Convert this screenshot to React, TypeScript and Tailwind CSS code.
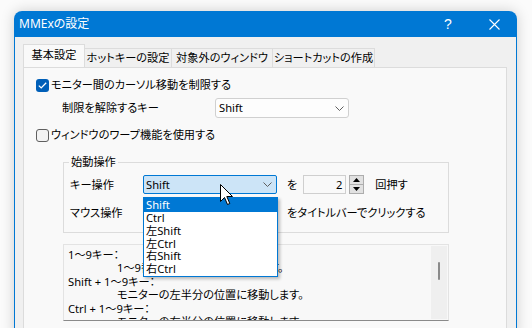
import React from "react";

function Chevron() {
  return (
    <svg width="9" height="5" viewBox="0 0 9 5" className="shrink-0">
      <path d="M0.5 0.5 L4.5 4.5 L8.5 0.5" fill="none" stroke="#5f5f5f" strokeWidth="1" />
    </svg>
  );
}

function Check() {
  return (
    <div className="w-[13px] h-[13px] rounded-[3px] bg-[#005fb8] flex items-center justify-center shrink-0">
      <svg width="9" height="7" viewBox="0 0 9 7">
        <path d="M0.8 3.6 L3.2 5.9 L8.2 0.8" fill="none" stroke="#ffffff" strokeWidth="1.3" />
      </svg>
    </div>
  );
}

function Unchecked() {
  return <div className="w-[13px] h-[13px] rounded-[3px] border border-[#5f5f5f] bg-[#f3f3f3] shrink-0" />;
}

export default function App() {
  const items = ["Shift", "Ctrl", "左Shift", "左Ctrl", "右Shift", "右Ctrl"];
  return (
    <div className="relative w-[532px] h-[328px] overflow-hidden bg-[#fbfbfb] text-[11.2px] text-black whitespace-nowrap font-['Noto_Sans','Noto_Sans_CJK_JP',sans-serif] [font-feature-settings:'palt']">
      <div className="ml-[14px] mt-[11px] w-[503px] shadow-[0_0_14px_rgba(0,0,0,0.18)] rounded-t-[8px]">
        {/* title bar */}
        <div className="h-[26px] bg-[#0078d4] rounded-t-[8px] flex items-center text-white pl-[5px]">
          <span className="text-[12px] leading-none">MMExの設定</span>
          <div className="flex-1" />
          <span className="text-[14px] leading-none w-[10px] mr-[35px] [font-family:'Liberation_Sans',sans-serif]">?</span>
          <svg width="11" height="11" viewBox="0 0 11 11" className="mr-[17px]">
            <path d="M0.5 0.5 L10.5 10.5 M10.5 0.5 L0.5 10.5" stroke="#ffffff" strokeWidth="1.1" />
          </svg>
        </div>
        {/* body */}
        <div className="h-[300px] bg-[#f0f0f0] border-x border-[#0078d4] pt-[8px] pl-[8px]">
          {/* tabs */}
          <div className="flex items-end h-[22px] relative z-10">
            <div className="w-[62px] h-[23px] bg-[#f9f9f9] border border-b-0 border-[#dcdcdc] flex items-center justify-center pb-[2px] leading-none">
              基本設定
            </div>
            <div className="w-[87px] h-[19px] bg-[#f0f0f0] border border-l-0 border-b-0 border-[#dcdcdc] flex items-center justify-center leading-none">
              ホットキーの設定
            </div>
            <div className="w-[101px] h-[19px] bg-[#f0f0f0] border border-l-0 border-b-0 border-[#dcdcdc] flex items-center justify-center leading-none">
              対象外のウィンドウ
            </div>
            <div className="w-[102px] h-[19px] bg-[#f0f0f0] border border-l-0 border-b-0 border-[#dcdcdc] flex items-center justify-center leading-none">
              ショートカットの作成
            </div>
          </div>
          {/* panel */}
          <div className="w-[484px] h-[270px] bg-[#f9f9f9] border border-[#dcdcdc] flex flex-col">
            <div className="mt-[10px] h-[14px] pl-[12px] flex items-center gap-[2px] leading-none">
              <Check />
              <span>モニター間のカーソル移動を制限する</span>
            </div>
            <div className="mt-[6px] h-[20px] pl-[38px] flex items-center leading-none">
              <span className="w-[153px]">制限を解除するキー</span>
              <div className="w-[134px] h-[20px] bg-[#fdfdfd] border border-[#d0d0d0] rounded-[3px] flex items-center pl-[3px] pr-[4px]">
                <span className="flex-1">Shift</span>
                <Chevron />
              </div>
            </div>
            <div className="mt-[10px] h-[14px] pl-[12px] flex items-center gap-[2px] leading-none">
              <Unchecked />
              <span>ウィンドウのワープ機能を使用する</span>
            </div>
            {/* group box */}
            <div className="mt-[20px] ml-[39px] w-[386px] h-[71px] border border-[#dcdcdc] relative flex flex-col">
              <span className="absolute -top-[8px] left-[5px] bg-[#f9f9f9] px-[2px] leading-[14px]">始動操作</span>
              <div className="mt-[12px] h-[19px] pl-[6px] flex items-center leading-none">
                <span className="w-[73px]">キー操作</span>
                <div className="w-[134px] h-[19px] bg-[#cce4f7] border border-[#0078d4] rounded-[2px] flex items-center pl-[2px] pr-[4px]">
                  <span className="flex-1">Shift</span>
                  <Chevron />
                </div>
                <span className="ml-[10px]">を</span>
                <div className="ml-[6px] w-[43px] h-[19px] bg-[#f9f9f9] border border-[#cfcfcf] flex items-center justify-end pr-[3px]">
                  2
                </div>
                <div className="ml-[3px] w-[15px] h-[19px] flex flex-col border border-[#adadad] bg-[#e1e1e1]">
                  <div className="flex-1 flex items-center justify-center border-b border-[#adadad]">
                    <svg width="7" height="4" viewBox="0 0 7 4"><path d="M0 4 L3.5 0 L7 4 Z" fill="#000" /></svg>
                  </div>
                  <div className="flex-1 flex items-center justify-center">
                    <svg width="7" height="4" viewBox="0 0 7 4"><path d="M0 0 L3.5 4 L7 0 Z" fill="#000" /></svg>
                  </div>
                </div>
                <span className="ml-[11px]">回押す</span>
              </div>
              <div className="mt-[12px] h-[14px] pl-[6px] flex items-center leading-none">
                <span className="w-[73px]">マウス操作</span>
                <div className="w-[134px]" />
                <span className="ml-[10px]">をタイトルバーでクリックする</span>
              </div>
            </div>
            {/* text box */}
            <div className="mt-[11px] ml-[39px] w-[386px] h-[77px] bg-[#f8f8f8] border border-[#e3e3e3] border-b-[#8a8a8a] flex overflow-hidden">
              <div className="flex-1 pt-[3px] pl-[4px] leading-[13.4px]">
                <div>1〜9キー：</div>
                <div className="pl-[49px]">1〜9番目のモニターに移動します。</div>
                <div>Shift + 1〜9キー：</div>
                <div className="pl-[49px]">モニターの左半分の位置に移動します。</div>
                <div>Ctrl + 1〜9キー：</div>
                <div className="pl-[49px]">モニターの右半分の位置に移動します。</div>
              </div>
              <div className="w-[16px] mr-[1px] my-[1px] bg-[#efefef] flex justify-center">
                <div className="mt-[16px] w-[2px] h-[18px] bg-[#8a8a8a] rounded-full" />
              </div>
            </div>
          </div>
        </div>
      </div>

      {/* dropdown list overlay */}
      <div className="absolute left-[143px] top-[197px] w-[135px] h-[80px] bg-white border border-[#0078d4] shadow-[2px_2px_3px_rgba(0,0,0,0.25)] flex flex-col leading-[12.8px]">
        {items.map((t, i) => (
          <div
            key={t}
            className={i === 0 ? "h-[14px] bg-[#0078d4] text-white pl-[2px] flex items-center" : "h-[12.8px] pl-[2px] flex items-center"}
          >
            {t}
          </div>
        ))}
      </div>

      {/* mouse cursor */}
      <svg className="absolute left-[220px] top-[184px]" width="14" height="22" viewBox="0 0 14 22">
        <path d="M0.5 0.5 L0.5 17.5 L4.5 13.5 L7.5 20.5 L9.8 19.5 L6.8 12.5 L12.5 12.5 Z" fill="#ffffff" stroke="#000000" strokeWidth="1" strokeLinejoin="miter" />
      </svg>
    </div>
  );
}
